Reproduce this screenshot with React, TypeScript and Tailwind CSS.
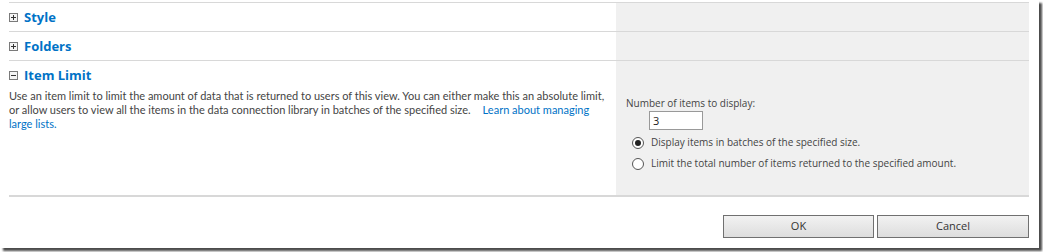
import React from 'react';

const font = { fontFamily: '"Open Sans", "Noto Sans", sans-serif' };
const body = { fontFamily: 'Lato, "Open Sans", sans-serif' };

function ToggleIcon({ open }: { open: boolean }) {
  return (
    <svg width="9" height="9" viewBox="0 0 9 9" className="shrink-0">
      <rect x="0.5" y="0.5" width="8" height="8" fill="#f4f4f4" stroke="#7a7a7a" />
      <rect x="2" y="4" width="5" height="1" fill="#333" />
      {!open && <rect x="4" y="2" width="1" height="5" fill="#333" />}
    </svg>
  );
}

function SectionHeader({ title, open }: { title: string; open: boolean }) {
  return (
    <div className="flex items-center gap-[6px] h-[28px]">
      <ToggleIcon open={open} />
      <span className="text-[13px] font-bold text-[#0072c6] leading-none">{title}</span>
    </div>
  );
}

function Radio({ checked, label }: { checked: boolean; label: string }) {
  return (
    <label className="flex items-center gap-[7px] h-[21px]">
      <span className="w-[12px] h-[12px] rounded-full border border-[#555] bg-white flex items-center justify-center">
        {checked && <span className="w-[6px] h-[6px] rounded-full bg-[#222]" />}
      </span>
      <span className="text-[10px] text-[#444]">{label}</span>
    </label>
  );
}

export default function App() {
  return (
    <div className="w-[1043px] h-[252px] bg-white" style={font}>
      <div className="w-[1039px] h-[248px] bg-white shadow-[3px_3px_2px_rgba(0,0,0,0.7)] pt-[2px] pl-[9px]">
        <div className="w-[1020px]">
          {/* Style */}
          <div className="flex border-t border-[#d8d8d8]">
            <div className="w-[607px]">
              <SectionHeader title="Style" open={false} />
            </div>
            <div className="flex-1 bg-[#f0f0f0]" />
          </div>

          {/* Folders */}
          <div className="flex border-t border-[#d8d8d8]">
            <div className="w-[607px]">
              <SectionHeader title="Folders" open={false} />
            </div>
            <div className="flex-1 bg-[#f0f0f0]" />
          </div>

          {/* Item Limit */}
          <div className="flex border-t border-[#d8d8d8] h-[137px] border-b-2 border-b-[#d8d8d8]">
            <div className="w-[607px] pr-[5px]">
              <SectionHeader title="Item Limit" open={true} />
              <p className="text-[11px] leading-[14px] text-[#444]" style={body}>
                Use an item limit to limit the amount of data that is returned to users of this view. You can either make this an absolute limit, or allow users to view all the items in the data connection library in batches of the specified size.
                <span className="ml-[12px] text-[#0072c6]">Learn about managing large lists.</span>
              </p>
            </div>
            <div className="flex-1 bg-[#f0f0f0] pl-[10px] pt-[35px]">
              <div className="text-[10px] text-[#444] leading-[14px]">Number of items to display:</div>
              <div className="pl-[23px] pt-[1px]">
                <input
                  readOnly
                  value="3"
                  className="block w-[54px] h-[19px] border border-[#999] bg-white px-[3px] text-[11px] text-[#222] outline-none"
                />
              </div>
              <div className="pl-[6px] pt-[2px]">
                <Radio checked={true} label="Display items in batches of the specified size." />
                <Radio checked={false} label="Limit the total number of items returned to the specified amount." />
              </div>
            </div>
          </div>

          {/* Buttons */}
          <div className="flex justify-end gap-[3px] pt-[18px]">
            <button className="w-[151px] h-[23px] border border-[#707070] bg-gradient-to-b from-[#f2f2f2] to-[#dddddd] text-[11px] text-[#333]">
              OK
            </button>
            <button className="w-[152px] h-[23px] border border-[#707070] bg-gradient-to-b from-[#f2f2f2] to-[#dddddd] text-[11px] text-[#333]">
              Cancel
            </button>
          </div>
        </div>
      </div>
    </div>
  );
}
